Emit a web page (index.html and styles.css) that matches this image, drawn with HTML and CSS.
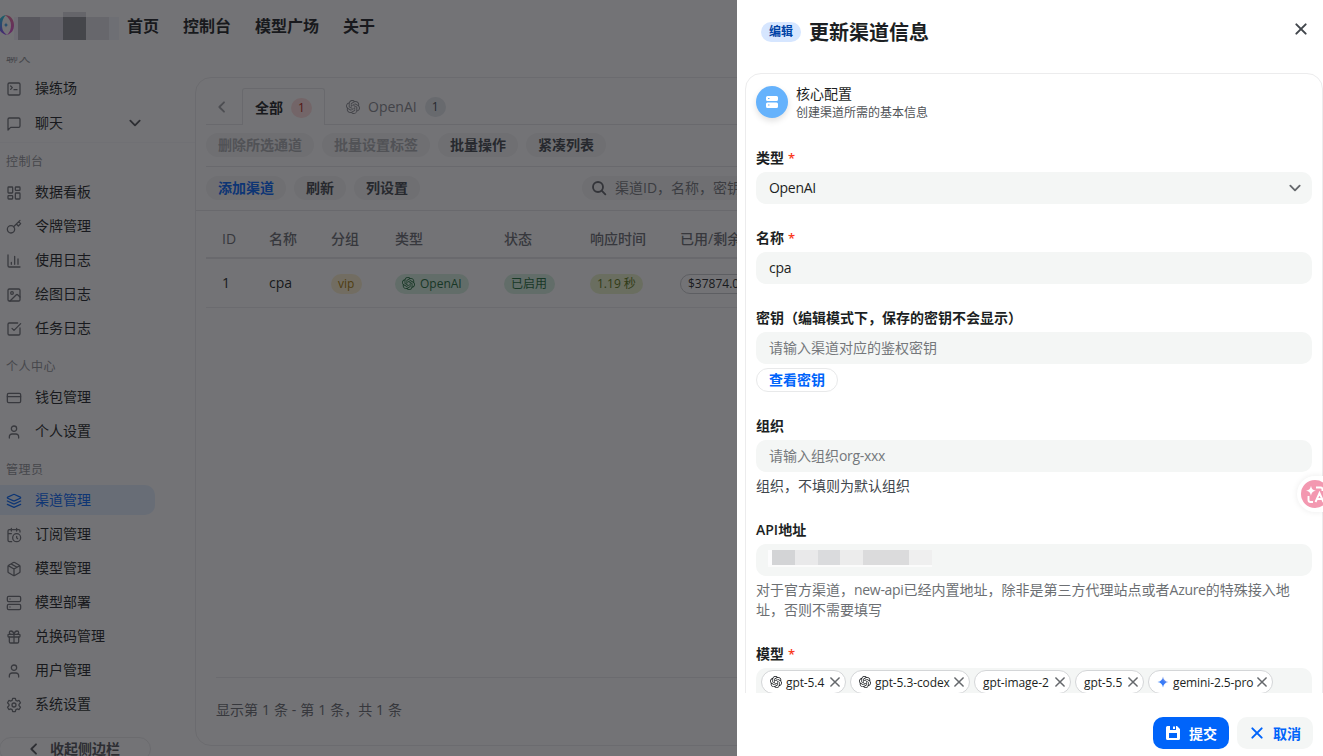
FILE: index.html
```html
<!DOCTYPE html>
<html lang="zh-CN">
<head>
    <meta charset="UTF-8">
    <meta name="viewport" content="width=device-width, initial-scale=1.0">
    <title>渠道管理</title>
    <link rel="stylesheet" href="styles.css">
</head>
<body>
    <svg class="sprite">
        <symbol id="i-openai" viewBox="0 0 24 24">
            <path fill="currentColor" d="M22.28 9.82a5.98 5.98 0 0 0-.52-4.91 6.05 6.05 0 0 0-6.51-2.9A6.07 6.07 0 0 0 4.98 4.18a5.98 5.98 0 0 0-4 2.9 6.05 6.05 0 0 0 .74 7.1 5.98 5.98 0 0 0 .51 4.91 6.05 6.05 0 0 0 6.52 2.9A5.98 5.98 0 0 0 13.26 24a6.06 6.06 0 0 0 5.77-4.21 5.99 5.99 0 0 0 4-2.9 6.06 6.06 0 0 0-.75-7.07zm-9.02 12.61a4.48 4.48 0 0 1-2.88-1.04l.14-.08 4.78-2.76a.79.79 0 0 0 .39-.68v-6.74l2.02 1.17a.07.07 0 0 1 .04.05v5.58a4.5 4.5 0 0 1-4.49 4.5zM3.6 18.3a4.47 4.47 0 0 1-.54-3.01l.14.09 4.79 2.76a.77.77 0 0 0 .78 0l5.84-3.37v2.33a.08.08 0 0 1-.03.06L9.74 19.95a4.5 4.5 0 0 1-6.14-1.65zM2.34 7.9a4.49 4.49 0 0 1 2.37-1.98v5.68a.77.77 0 0 0 .38.68l5.82 3.35-2.02 1.17a.08.08 0 0 1-.07 0L3.99 14A4.5 4.5 0 0 1 2.34 7.9zm16.6 3.86-5.84-3.39 2.02-1.16a.08.08 0 0 1 .07 0l4.83 2.79a4.49 4.49 0 0 1-.68 8.1v-5.68a.79.79 0 0 0-.4-.66zm2.01-3.03-.14-.08-4.77-2.78a.78.78 0 0 0-.79 0L9.41 9.23V6.9a.07.07 0 0 1 .03-.06l4.83-2.79a4.5 4.5 0 0 1 6.68 4.66zM8.31 12.86l-2.02-1.16a.08.08 0 0 1-.04-.06V6.07a4.5 4.5 0 0 1 7.38-3.45l-.14.08-4.78 2.76a.79.79 0 0 0-.39.68zm1.1-2.36 2.6-1.5 2.6 1.5v3l-2.6 1.5-2.6-1.5z"/>
        </symbol>
        <symbol id="i-down" viewBox="0 0 24 24"><path d="m5 8.500 7 7 7-7"/></symbol>
        <symbol id="i-left" viewBox="0 0 24 24"><path d="m15 5-7 7 7 7"/></symbol>
        <symbol id="i-x" viewBox="0 0 24 24"><path d="M5 5l14 14M19 5 5 19"/></symbol>
        <symbol id="i-user" viewBox="0 0 24 24"><path d="M19 21v-2a4 4 0 0 0-4-4H9a4 4 0 0 0-4 4v2"/><circle cx="12" cy="7" r="4"/></symbol>
    </svg>

    <header class="topbar">
        <svg class="logo" viewBox="0 0 16 20">
            <defs>
                <linearGradient id="lg1" x1="0" y1="0" x2="0" y2="1"><stop offset="0" stop-color="#20d0d8"/><stop offset=".5" stop-color="#4a90f0"/><stop offset="1" stop-color="#9a3cf0"/></linearGradient>
                <linearGradient id="lg2" x1="0" y1="0" x2="0" y2="1"><stop offset="0" stop-color="#e87098"/><stop offset="1" stop-color="#d848d8"/></linearGradient>
            </defs>
            <path fill="url(#lg1)" d="M8 0C3 1 0 5 0 10c0 5 4 9 9 10C5 17 4 14 4 10c0-4 1-7 4-10z"/>
            <path fill="url(#lg2)" d="M7 0c5 0 9 4 9 10 0 5-2 8-7 10 3-3 4-6 4-10 0-4-2-7-6-10z"/>
            <path fill="#38a0e8" d="M8 7.500c.4 1.700 1 2.200 2.500 2.500-1.500.4-2.100 1-2.500 2.500-.4-1.500-1-2.100-2.500-2.500 1.500-.3 2.100-.8 2.500-2.500z"/>
        </svg>
        <div class="mosaic">
            <i class="m0"></i><i class="m1"></i><i class="m2"></i><i class="m3"></i><i class="m4"></i><i class="m5"></i>
        </div>
        <nav class="topnav">
            <a>首页</a><a>控制台</a><a>模型广场</a><a>关于</a>
        </nav>
    </header>

    <div class="layout">
        <aside class="sidebar">
            <div class="menu">
                <div class="group-label">聊天</div>
                <a class="item"><svg class="ico" viewBox="0 0 24 24"><rect x="3" y="3" width="18" height="18" rx="2"/><path d="m7 7.500 2.500 2.500L7 12.500M12 13h4.500"/></svg>操练场</a>
                <a class="item chat"><svg class="ico" viewBox="0 0 24 24"><path d="M21 15a2 2 0 0 1-2 2H7l-4 4V5a2 2 0 0 1 2-2h14a2 2 0 0 1 2 2z"/></svg>聊天<svg class="ico arrow"><use href="#i-down"/></svg></a>
                <div class="group-line"></div>
                <div class="group-label">控制台</div>
                <a class="item"><svg class="ico" viewBox="0 0 24 24"><rect x="3" y="3" width="7" height="9" rx="1"/><rect x="14" y="3" width="7" height="5" rx="1"/><rect x="14" y="12" width="7" height="9" rx="1"/><rect x="3" y="16" width="7" height="5" rx="1"/></svg>数据看板</a>
                <a class="item"><svg class="ico" viewBox="0 0 24 24"><circle cx="7.500" cy="15.500" r="5.500"/><path d="m21 2-9.600 9.600M15.500 7.500l3 3L22 7l-3-3"/></svg>令牌管理</a>
                <a class="item"><svg class="ico" viewBox="0 0 24 24"><path d="M3 3v16a2 2 0 0 0 2 2h16M18 17V9M13 17V5M8 17v-3"/></svg>使用日志</a>
                <a class="item"><svg class="ico" viewBox="0 0 24 24"><rect x="3" y="3" width="18" height="18" rx="2"/><circle cx="9" cy="9" r="2"/><path d="m21 15-3.100-3.100a2 2 0 0 0-2.800 0L6 21"/></svg>绘图日志</a>
                <a class="item"><svg class="ico" viewBox="0 0 24 24"><path d="M21 10.500V19a2 2 0 0 1-2 2H5a2 2 0 0 1-2-2V5a2 2 0 0 1 2-2h12.500M9 11l3 3L22 4"/></svg>任务日志</a>
                <div class="group-label">个人中心</div>
                <a class="item"><svg class="ico" viewBox="0 0 24 24"><rect x="2" y="5" width="20" height="14" rx="2"/><path d="M2 10h20"/></svg>钱包管理</a>
                <a class="item"><svg class="ico"><use href="#i-user"/></svg>个人设置</a>
                <div class="group-label">管理员</div>
                <a class="item active"><svg class="ico" viewBox="0 0 24 24"><path d="M12.800 2.200a2 2 0 0 0-1.600 0L2.600 6.100a1 1 0 0 0 0 1.800l8.600 3.900a2 2 0 0 0 1.600 0l8.600-3.900a1 1 0 0 0 0-1.800zM2 12l9.200 4.200a2 2 0 0 0 1.600 0L22 12M2 17l9.200 4.200a2 2 0 0 0 1.600 0L22 17"/></svg>渠道管理</a>
                <a class="item"><svg class="ico" viewBox="0 0 24 24"><path d="M21 7.500V6a2 2 0 0 0-2-2H5a2 2 0 0 0-2 2v14a2 2 0 0 0 2 2h3.500M16 2v4M8 2v4M3 10h5M17.500 17.500 16 16.300V14"/><circle cx="16" cy="16" r="6"/></svg>订阅管理</a>
                <a class="item"><svg class="ico" viewBox="0 0 24 24"><path d="M11 21.700a2 2 0 0 0 2 0l7-4a2 2 0 0 0 1-1.700V8a2 2 0 0 0-1-1.700l-7-4a2 2 0 0 0-2 0l-7 4A2 2 0 0 0 3 8v8a2 2 0 0 0 1 1.700zM12 22V12M3.300 7 12 12l8.700-5M7.500 4.300l9 5.100"/></svg>模型管理</a>
                <a class="item"><svg class="ico" viewBox="0 0 24 24"><rect x="2" y="2" width="20" height="8" rx="2"/><rect x="2" y="14" width="20" height="8" rx="2"/><path d="M6 6h.01M6 18h.01"/></svg>模型部署</a>
                <a class="item"><svg class="ico" viewBox="0 0 24 24"><rect x="3" y="8" width="18" height="4" rx="1"/><path d="M12 8v13M19 12v7a2 2 0 0 1-2 2H7a2 2 0 0 1-2-2v-7M7.500 8a2.500 2.500 0 0 1 0-5C11 3 12 8 12 8s1-5 4.500-5a2.500 2.500 0 0 1 0 5"/></svg>兑换码管理</a>
                <a class="item"><svg class="ico"><use href="#i-user"/></svg>用户管理</a>
                <a class="item"><svg class="ico" viewBox="0 0 24 24"><path d="M10 2h4l.8 3 1.900 1.100 3-.9 2 3.500L19.500 11v2l2.200 2.300-2 3.500-3-.9-1.900 1.100-.8 3h-4l-.8-3-1.900-1.100-3 .9-2-3.500L4.500 13v-2L2.300 8.700l2-3.500 3 .9L9.200 5z"/><circle cx="12" cy="12" r="3"/></svg>系统设置</a>
            </div>
            <div class="collapse"><svg class="ico"><use href="#i-left"/></svg>收起侧边栏</div>
        </aside>

        <main class="panel">
            <div class="tabs">
                <span class="tab-prev"><svg class="ico"><use href="#i-left"/></svg></span>
                <span class="tab current">全部<b class="count red">1</b></span>
                <span class="tab"><svg class="brand"><use href="#i-openai"/></svg>OpenAI<b class="count">1</b></span>
                <span class="tab-rest"></span>
            </div>
            <div class="actions first">
                <button class="pill off">删除所选通道</button>
                <button class="pill off">批量设置标签</button>
                <button class="pill">批量操作</button>
                <button class="pill">紧凑列表</button>
            </div>
            <div class="actions second">
                <button class="pill blue">添加渠道</button>
                <button class="pill">刷新</button>
                <button class="pill">列设置</button>
                <div class="search"><svg class="ico" viewBox="0 0 24 24"><circle cx="10.500" cy="10.500" r="7.500"/><path d="m16 16 5.500 5.500"/></svg>渠道ID，名称，密钥</div>
            </div>
            <div class="table">
                <div class="row head">
                    <span>ID</span><span>名称</span><span>分组</span><span>类型</span><span>状态</span><span>响应时间</span><span>已用/剩余</span>
                </div>
                <div class="row">
                    <span>1</span><span>cpa</span>
                    <span><em class="tag yellow">vip</em></span>
                    <span><em class="tag green"><svg class="brand"><use href="#i-openai"/></svg>OpenAI</em></span>
                    <span><em class="tag green">已启用</em></span>
                    <span><em class="tag lime">1.19 秒</em></span>
                    <span><em class="tag ghost">$37874.02</em></span>
                </div>
            </div>
            <div class="pager">显示第 1 条 - 第 1 条，共 1 条</div>
        </main>
    </div>

    <div class="mask"></div>

    <section class="drawer">
        <div class="drawer-head">
            <span class="edit-tag">编辑</span>
            <h2>更新渠道信息</h2>
            <svg class="ico close"><use href="#i-x"/></svg>
        </div>
        <div class="drawer-body">
            <div class="form-card">
                <div class="intro">
                    <span class="avatar"><svg viewBox="0 0 16 16"><path fill="#fff" fill-rule="evenodd" d="M3.500 2h9A1.500 1.500 0 0 1 14 3.500v2A1.500 1.500 0 0 1 12.500 7h-9A1.500 1.500 0 0 1 2 5.500v-2A1.500 1.500 0 0 1 3.500 2zM4 4v1h1.500V4zM3.500 8.500h9A1.500 1.500 0 0 1 14 10v2.500a1.500 1.500 0 0 1-1.500 1.500h-9A1.500 1.500 0 0 1 2 12.500V10a1.500 1.500 0 0 1 1.500-1.500zM4 10.500v1h1.500v-1z"/></svg></span>
                    <div>
                        <div class="intro-title">核心配置</div>
                        <div class="intro-sub">创建渠道所需的基本信息</div>
                    </div>
                </div>
                <div class="field">
                    <label>类型<i>*</i></label>
                    <div class="input"><span class="latin">OpenAI</span><svg class="ico caret"><use href="#i-down"/></svg></div>
                </div>
                <div class="field">
                    <label>名称<i>*</i></label>
                    <div class="input"><span class="latin">cpa</span></div>
                </div>
                <div class="field">
                    <label>密钥（编辑模式下，保存的密钥不会显示）</label>
                    <div class="input hint">请输入渠道对应的鉴权密钥</div>
                    <button class="view-key">查看密钥</button>
                </div>
                <div class="field">
                    <label>组织</label>
                    <div class="input hint">请输入组织<span class="latin">org-xxx</span></div>
                    <p class="extra dark">组织，不填则为默认组织</p>
                </div>
                <div class="field">
                    <label>API地址</label>
                    <div class="input"><div class="redact"><i class="r0"></i><i class="r1"></i><i class="r2"></i><i class="r3"></i><i class="r4"></i><i class="r5"></i><i class="r6"></i></div></div>
                    <p class="extra">对于官方渠道，<span class="latin">new-api</span>已经内置地址，除非是第三方代理站点或者<span class="latin">Azure</span>的特殊接入地址，否则不需要填写</p>
                </div>
                <div class="field">
                    <label>模型<i>*</i></label>
                    <div class="input models">
                        <span class="model w1"><svg class="brand"><use href="#i-openai"/></svg>gpt-5.4<svg class="ico"><use href="#i-x"/></svg></span>
                        <span class="model w2"><svg class="brand"><use href="#i-openai"/></svg>gpt-5.3-codex<svg class="ico"><use href="#i-x"/></svg></span>
                        <span class="model w3">gpt-image-2<svg class="ico"><use href="#i-x"/></svg></span>
                        <span class="model w4">gpt-5.5<svg class="ico"><use href="#i-x"/></svg></span>
                        <span class="model w5"><svg class="brand" viewBox="0 0 24 24"><defs><linearGradient id="gem" x1="0" y1="1" x2="1" y2="0"><stop offset="0" stop-color="#1c7dff"/><stop offset=".55" stop-color="#3f7bf5"/><stop offset="1" stop-color="#f0dcd6"/></linearGradient></defs><path fill="url(#gem)" d="M12 1c1 6.500 4.500 10 11 11-6.500 1-10 4.500-11 11-1-6.500-4.500-10-11-11 6.500-1 10-4.500 11-11z"/></svg>gemini-2.5-pro<svg class="ico"><use href="#i-x"/></svg></span>
                    </div>
                </div>
            </div>
        </div>
        <div class="drawer-foot">
            <button class="btn primary"><svg viewBox="0 0 16 16"><path fill="#fff" fill-rule="evenodd" d="M2.500 1H5v4h6V1h1l3 3v9.500a1.500 1.500 0 0 1-1.500 1.500h-11A1.500 1.500 0 0 1 1 13.500v-11A1.500 1.500 0 0 1 2.500 1zM8 1.500h2V4H8zM4 8v5h8V8z"/></svg>提交</button>
            <button class="btn"><svg class="ico"><use href="#i-x"/></svg>取消</button>
        </div>
    </section>

    <div class="float">
        <svg viewBox="0 0 28 28">
            <circle cx="14" cy="14" r="14" fill="#f398b0"/>
            <path fill="#fff" d="M10 5.500c.6 3.400 1.800 4.600 5 5.200-3.200.6-4.400 1.800-5 5.200-.6-3.400-1.800-4.600-5-5.200 3.200-.6 4.400-1.800 5-5.200z"/>
            <path fill="none" stroke="#fff" stroke-width="1.900" d="M15 7.500h4.500a2 2 0 0 1 2 2V11M7.500 16v4a2 2 0 0 0 2 2H12M14.500 22l4-9 4 9M16 19h5"/>
        </svg>
    </div>
</body>
</html>
```
FILE: styles.css
```css
* {
    box-sizing: border-box;
}

body {
    margin: 0;
    height: 756px;
    overflow: hidden;
    display: flex;
    flex-direction: column;
    font-family: "Open Sans", "Noto Sans CJK SC", sans-serif;
    font-size: 14px;
    line-height: 20px;
    color: #1c1f23;
    background: #fff;
}

button {
    font-family: inherit;
    border: none;
    margin: 0;
}

.sprite {
    position: absolute;
    width: 0;
    height: 0;
}

.ico {
    width: 16px;
    height: 16px;
    flex: none;
    fill: none;
    stroke: currentColor;
    stroke-width: 2;
    stroke-linecap: round;
    stroke-linejoin: round;
}

.brand {
    width: 12px;
    height: 12px;
    flex: none;
}

.latin {
    letter-spacing: -0.3px;
}

/* top bar */
.topbar {
    height: 57px;
    flex: none;
    display: flex;
    align-items: center;
    padding-bottom: 5px;
}

.logo {
    width: 16px;
    height: 20px;
    margin: 0 0 2px -2px;
    flex: none;
}

.mosaic {
    display: flex;
    align-items: flex-end;
    height: 28px;
    margin: 0 8px 1px 0;
}

.mosaic i {
    height: 23px;
    width: 23px;
}

.mosaic .m0 { width: 4px; background: #f4f0fc; }
.mosaic .m1 { width: 22px; background: #bcbac4; }
.mosaic .m2 { background: #d5d3dc; }
.mosaic .m3 { height: 28px; background: linear-gradient(#dcdce0 5px, #8c8f95 5px); }
.mosaic .m4 { background: #e2e2e6; }
.mosaic .m5 { width: 10px; background: #f2f5fa; }

.topnav {
    display: flex;
    gap: 24px;
    font-size: 16px;
    font-weight: 600;
}

/* sidebar */
.layout {
    flex: 1;
    min-height: 0;
    display: flex;
}

.sidebar {
    width: 195px;
    flex: none;
    height: 699px;
    overflow: hidden;
}

.menu {
    margin-top: -7px;
    height: 687px;
}

.group-label {
    height: 16px;
    line-height: 16px;
    margin-bottom: 7px;
    padding-left: 6px;
    font-size: 12px;
    letter-spacing: 0.5px;
    color: #8f9195;
}

.item + .group-label {
    margin-top: 16px;
}

.group-line {
    height: 1px;
    margin: 2px 0 11px;
    background: #f8f8f9;
}

.item {
    display: flex;
    align-items: center;
    width: 155px;
    height: 30px;
    margin-bottom: 4px;
    padding-left: 6px;
    border-radius: 0 10px 10px 0;
}

.item.chat {
    margin-top: 5px;
}

.item .ico {
    margin: 1px 13px 0 0;
    color: #6b6e73;
    stroke-width: 1.9;
}

.item .arrow {
    margin: 0 12px 0 auto;
    color: #505357;
    stroke-width: 2.800;
}

.item.active {
    background: #e3f1ff;
    color: #0064fa;
}

.item.active .ico {
    color: #0064fa;
}

.collapse {
    display: flex;
    align-items: center;
    gap: 8px;
    width: 152px;
    height: 24px;
    margin-left: -1px;
    padding-left: 26px;
    border: 1px solid #eaebec;
    border-radius: 12px;
    font-weight: 600;
    color: #505357;
}

.collapse .ico {
    stroke-width: 2.800;
}

/* channel table */
.panel {
    flex: 1;
    height: 669px;
    margin-top: 20px;
    border: 1px solid #ececed;
    border-radius: 16px;
    display: flex;
    flex-direction: column;
}

.tabs {
    display: flex;
    height: 47px;
    padding: 10px 0 0 10px;
}

.tab-prev {
    width: 36px;
    padding: 11px 0 0 8px;
    border-bottom: 1px solid #e6e7e8;
    color: #a0a2a6;
}

.tab-prev .ico {
    stroke-width: 2.800;
}

.tab {
    display: flex;
    align-items: center;
    padding: 1px 0 0 21px;
    border-bottom: 1px solid #e6e7e8;
    color: #85878c;
}

.tab .brand {
    width: 14px;
    height: 14px;
    margin-right: 8px;
}

.tab.current {
    width: 83px;
    padding-left: 12px;
    border: 1px solid #e6e7e8;
    border-bottom: none;
    border-radius: 3px 3px 0 0;
    color: #1c1f23;
    font-weight: 600;
}

.count {
    width: 21px;
    height: 20px;
    margin-left: 8px;
    border-radius: 10px;
    background: #e4e8ec;
    color: #41464c;
    font-size: 12px;
    font-weight: 400;
    text-align: center;
}

.count.red {
    background: #fedddb;
    color: #b2140c;
}

.tab-rest {
    flex: 1;
    border-bottom: 1px solid #e6e7e8;
}

.actions {
    display: flex;
    gap: 8px;
}

.actions.first {
    height: 42px;
    margin-left: 10px;
    padding-top: 8px;
    border-bottom: 1px solid #e6e7e8;
}

.actions.second {
    height: 44px;
    padding: 9px 0 0 10px;
    border-bottom: 1px solid #e6e7e8;
}

.pill {
    height: 24px;
    padding: 0 12px;
    border-radius: 12px;
    background: #f4f5f5;
    color: #41464c;
    font-size: 14px;
    font-weight: 600;
    line-height: 24px;
    white-space: nowrap;
}

.pill.off {
    color: #abadb0;
}

.pill.blue {
    color: #0064fa;
}

.search {
    display: flex;
    align-items: center;
    gap: 8px;
    width: 280px;
    height: 24px;
    margin-left: 154px;
    padding-left: 9px;
    border-radius: 12px;
    background: #f4f5f5;
    color: #75787c;
    white-space: nowrap;
    overflow: hidden;
}

.search .ico {
    stroke-width: 2.800;
    color: #606368;
}

.table {
    margin-left: 10px;
}

.row {
    display: grid;
    grid-template-columns: 47px 62px 64px 109px 86px 90px 120px;
    align-items: center;
    height: 49px;
    padding-left: 16px;
    border-bottom: 1px solid #ececed;
}

.row.head {
    height: 48px;
    padding-top: 10px;
    border-bottom: 2px solid #e6e7e8;
    color: #696c71;
    font-weight: 500;
}

.tag {
    display: inline-flex;
    align-items: center;
    gap: 5px;
    height: 20px;
    padding: 0 7.5px;
    margin-left: -0.5px;
    border-radius: 10px;
    font-size: 12px;
    font-style: normal;
    vertical-align: middle;
    white-space: nowrap;
}

.tag .brand {
    width: 13px;
    height: 13px;
}

.tag.yellow { background: #fcf1cc; color: #a87a00; }
.tag.green { background: #d5f0de; color: #1b6b38; }
.tag.lime { background: #e9f2c8; color: #5b7711; }
.tag.ghost { border: 1px solid #c9cbcd; }

.pager {
    margin: auto 0 0 20px;
    height: 68px;
    border-top: 1px solid #ececed;
    padding-top: 22px;
    color: #696c71;
    word-spacing: 0.3px;
}

.mask {
    position: absolute;
    inset: 0;
    background: rgba(22, 22, 26, 0.6);
}

/* edit drawer */
.drawer {
    position: absolute;
    top: 0;
    right: 0;
    width: 586px;
    height: 756px;
    display: flex;
    flex-direction: column;
    background: #fff;
}

.drawer-head {
    display: flex;
    align-items: center;
    height: 65px;
    padding: 0 14px 2px 24px;
    flex: none;
}

.edit-tag {
    height: 20px;
    padding: 0 8px;
    border-radius: 10px;
    background: #d6e6ff;
    color: #0042a5;
    font-size: 12px;
    font-weight: 600;
}

.drawer-head h2 {
    margin: 2px auto 0 8px;
    font-size: 20px;
    line-height: 28px;
    font-weight: 700;
}

.close {
    margin-bottom: 5px;
    color: #41464c;
    stroke-width: 3;
}

.drawer-body {
    flex: 1;
    min-height: 0;
    padding: 8px 0 0 8px;
    overflow: hidden;
}

.form-card {
    padding: 10px;
    border: 1px solid #ececed;
    border-radius: 16px;
}

.intro {
    display: flex;
    align-items: center;
    gap: 8px;
    height: 36px;
    margin-bottom: 16px;
}

.avatar {
    display: flex;
    align-items: center;
    justify-content: center;
    width: 32px;
    height: 32px;
    border-radius: 50%;
    background: #65b2fc;
    box-shadow: 0 3px 6px rgba(0, 0, 0, 0.12);
}

.avatar svg {
    width: 16px;
    height: 16px;
}

.intro-title {
    line-height: 20px;
}

.intro-sub {
    padding-top: 1px;
    font-size: 12px;
    line-height: 16px;
    color: #505357;
}

.field {
    padding: 12px 0;
}

.field label {
    display: block;
    height: 20px;
    margin-bottom: 4px;
    font-weight: 600;
}

.field label i {
    margin-left: 4px;
    color: #f93920;
    font-size: 13px;
    font-style: normal;
}

.input {
    display: flex;
    align-items: center;
    height: 32px;
    padding: 0 9px 0 13px;
    border-radius: 10px;
    background: #f4f6f5;
}

.input.hint {
    color: #75787c;
}

.caret {
    margin-left: auto;
    color: #65686c;
    stroke-width: 2.800;
}

.view-key {
    display: block;
    height: 24px;
    margin-top: 4px;
    padding: 0 12px;
    border: 1px solid #e8e9ea;
    border-radius: 12px;
    background: #fff;
    color: #0064fa;
    font-size: 14px;
    font-weight: 600;
    line-height: 20px;
}

.extra {
    margin: 4px 0 0;
    color: #6c6f73;
}

.extra.dark {
    color: #41464c;
}

.redact {
    display: flex;
    height: 17px;
    margin: -4px 0 0 -1px;
    border-bottom: 2px solid #fbfbfb;
}

.redact i { width: 23px; }
.redact .r0 { width: 4px; background: #fcfcfd; }
.redact .r1 { background: #d3d4d6; }
.redact .r2 { background: #e9e9ea; }
.redact .r3 { width: 22px; background: #dadbdd; }
.redact .r4 { background: #ececec; }
.redact .r5 { width: 46px; background: #dbdbdc; }
.redact .r6 { background: #efefef; }

.input.models {
    align-items: flex-start;
    gap: 4px;
    height: 64px;
    padding: 2px 0 0 5px;
}

.model {
    display: flex;
    align-items: center;
    height: 24px;
    padding: 1px 3px 0 8px;
    border: 1px solid #d4d6d8;
    border-radius: 12px;
    background: #fff;
    font-size: 12px;
    letter-spacing: -0.1px;
    white-space: nowrap;
}

.model .brand {
    margin: 0 4px 1px 0;
}

.model .ico {
    width: 14px;
    height: 14px;
    margin: 0 0 1px auto;
    color: #65686c;
    stroke-width: 2.600;
}

.w1 { width: 85px; }
.w2 { width: 120px; }
.w3 { width: 97px; }
.w4 { width: 69px; }
.w5 { width: 125px; }

.drawer-foot {
    display: flex;
    justify-content: flex-end;
    gap: 8px;
    height: 63px;
    padding: 24px 10px 0;
    flex: none;
}

.btn {
    display: flex;
    align-items: center;
    gap: 8px;
    width: 76px;
    height: 32px;
    padding: 0 12px;
    border-radius: 10px;
    background: #f4f6f5;
    color: #0064fa;
    font-size: 14px;
    font-weight: 600;
}

.btn svg {
    width: 16px;
    height: 16px;
    stroke-width: 3;
}

.btn.primary {
    background: #0064fa;
    color: #fff;
}

/* translate helper */
.float {
    position: absolute;
    left: 1297px;
    top: 476px;
    width: 26px;
    height: 36px;
    padding: 4px;
    border-radius: 18px 0 0 18px;
    background: #fff;
    box-shadow: 0 0 6px rgba(0, 0, 0, 0.08);
    overflow: hidden;
}

.float svg {
    display: block;
    width: 28px;
    height: 28px;
}
```
